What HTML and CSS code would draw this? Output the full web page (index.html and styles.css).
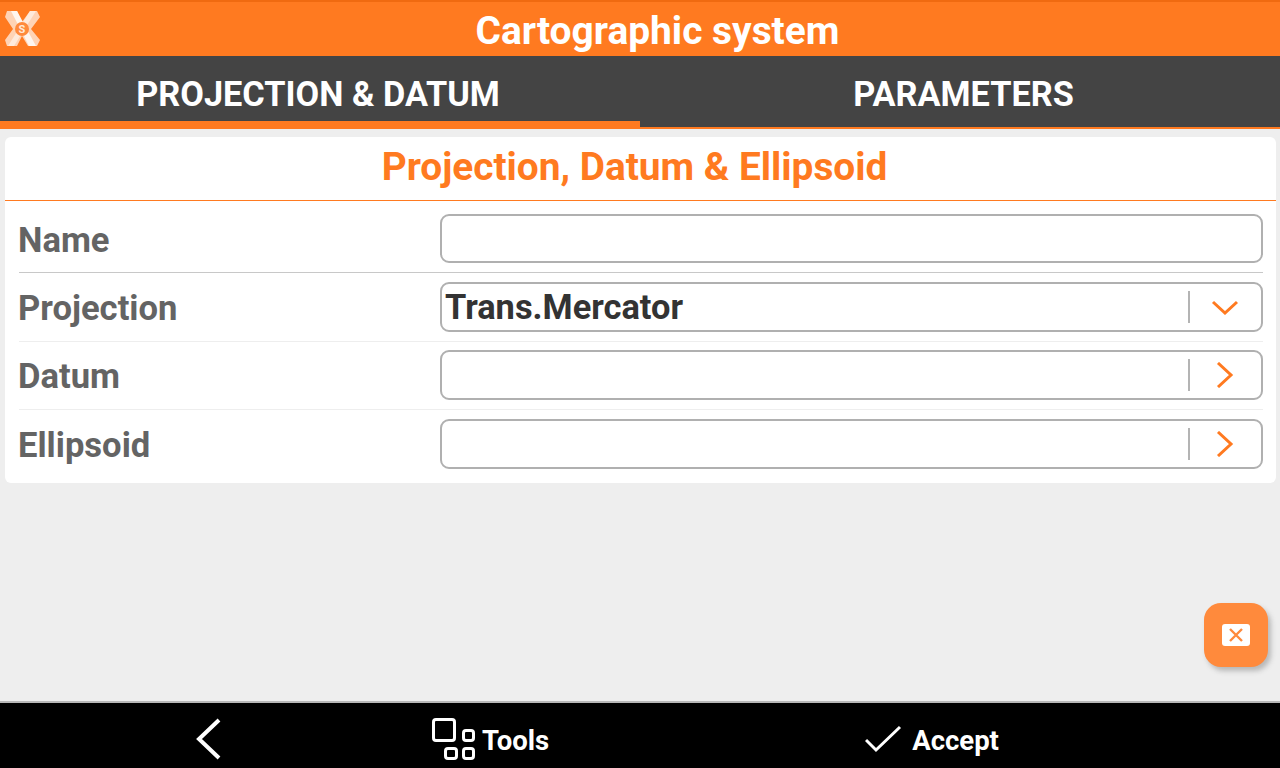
FILE: index.html
```html
<!DOCTYPE html>
<html lang="en">
<head>
<title>Cartographic system</title>
<meta charset="utf-8">
<meta name="viewport" content="width=device-width, initial-scale=1">
<link rel="stylesheet" href="styles.css">
</head>
<body>

<div class="header">
  <svg class="logo" width="44" height="50" viewBox="0 0 44 50">
    <path d="M7 11 L17 11 L22 22 L30 11 L37 11 L40 17 L31 29 L40 40 L37 46 L28 46 L22 36 L17 46 L7 46 L5 40 L13 29 L5 17 Z" fill="#ffd3b5"/>
    <path d="M11 11 L17 11 L36 46 L29 46 Z" fill="#fff6ef"/>
    <path d="M30 11 L36 11 L14 46 L8 46 Z" fill="#fff0e5" opacity="0.8"/>
    <circle cx="22" cy="29" r="7" fill="#ff8a3c"/>
    <text x="22" y="33" text-anchor="middle" class="logo_s">S</text>
  </svg>
  <h1>Cartographic system</h1>
</div>

<div class="tabs">
  <div class="tab active">PROJECTION &amp; DATUM</div>
  <div class="tab second">PARAMETERS</div>
</div>

<div class="content">
  <div class="card">
    <h2>Projection, Datum &amp; Ellipsoid</h2>

    <div class="row first">
      <label>Name</label>
      <div class="field"></div>
    </div>

    <div class="row">
      <label>Projection</label>
      <div class="field">
        <span class="value">Trans.Mercator</span>
        <span class="sep"></span>
        <svg class="arrow" width="28" height="16" viewBox="0 0 28 16"><path d="M2 3 L14 14 L26 3"/></svg>
      </div>
    </div>

    <div class="row">
      <label>Datum</label>
      <div class="field">
        <span class="sep"></span>
        <svg class="arrow" width="28" height="26" viewBox="0 0 28 26"><path d="M7 1 L20 13 L7 25"/></svg>
      </div>
    </div>

    <div class="row last">
      <label>Ellipsoid</label>
      <div class="field">
        <span class="sep"></span>
        <svg class="arrow" width="28" height="26" viewBox="0 0 28 26"><path d="M7 1 L20 13 L7 25"/></svg>
      </div>
    </div>
  </div>

  <div class="fab">
    <svg width="28" height="22" viewBox="0 0 28 22">
      <rect width="28" height="22" rx="3" fill="#fff"/>
      <path d="M8 5 L20 17 M20 5 L8 17" stroke="#ff8a3c" stroke-width="2.4"/>
    </svg>
  </div>
</div>

<div class="footer">
  <div class="foot_back">
    <svg width="28" height="42" viewBox="0 0 28 42"><path d="M24 2 L4 21 L24 40" class="foot_line"/></svg>
  </div>
  <div class="foot_tools">
    <svg width="44" height="42" viewBox="0 0 44 42" class="foot_icon">
      <rect x="1.5" y="1.5" width="21" height="21" rx="2.5"/>
      <rect x="31.5" y="12.5" width="10" height="10" rx="2.5"/>
      <rect x="13.5" y="30.5" width="11" height="10" rx="2.5"/>
      <rect x="31.5" y="30.5" width="10" height="10" rx="2.5"/>
    </svg>
    <span>Tools</span>
  </div>
  <div class="foot_accept">
    <svg width="38" height="28" viewBox="0 0 38 28"><path d="M1 15 L11 25 L35 2" class="foot_line thin"/></svg>
    <span>Accept</span>
  </div>
</div>

</body>
</html>
```

FILE: styles.css
```css
* {
  box-sizing: border-box;
}

html, body {
  margin: 0;
  height: 100%;
}

body {
  width: 1280px;
  height: 768px;
  overflow: hidden;
  display: flex;
  flex-direction: column;
  background-color: #eeeeee;
  font-family: Roboto, "Liberation Sans", sans-serif;
}

/* Top bar */
.header {
  height: 56px;
  background-color: #ff7a20;
  border-top: 2px solid #f06a10;
  display: flex;
  align-items: center;
  justify-content: center;
  position: relative;
}

.header h1 {
  margin: 0;
  padding: 4px 0 0 35px;
  color: #fff;
  font-size: 38.9px;
  font-weight: 700;
  line-height: 48px;
}

.logo {
  position: absolute;
  left: 0;
  top: -2px;
}

.logo_s {
  font-size: 11px;
  font-weight: 700;
  fill: #ffe9da;
}

/* Tabs */
.tabs {
  height: 73px;
  display: flex;
  background-color: #444444;
  border-bottom: 2px solid #ff7a20;
}

.tab {
  width: 50%;
  color: #fff;
  font-size: 34.3px;
  font-weight: 700;
  text-align: center;
  line-height: 76px;
}

.tab.active {
  height: 71px;
  border-bottom: 6px solid #ff7a20;
  padding-right: 4px;
}

.tab.second {
  padding-left: 7px;
}

/* Main area */
.content {
  flex: 1;
  padding: 8px 4px 0 5px;
  position: relative;
}

.card {
  background-color: #fff;
  border-radius: 6px;
  height: 346px;
  padding-bottom: 6px;
}

.card h2 {
  margin: 0;
  height: 64px;
  padding-right: 12px;
  color: #ff7a20;
  font-size: 38.8px;
  font-weight: 700;
  line-height: 60px;
  text-align: center;
  border-bottom: 1px solid #ff7a20;
}

.row {
  height: 68.5px;
  margin: 0 13px 0 14px;
  display: flex;
  align-items: center;
  justify-content: space-between;
  border-bottom: 1px solid #eeeeee;
}

.row.first {
  height: 72px;
  border-bottom: 1px solid #c8c8c8;
}

.row.last {
  border-bottom: none;
}

.row label {
  color: #646464;
  font-size: 34.6px;
  font-weight: 700;
  margin-top: 2px;
  margin-left: -1px;
}

.row.first label {
  margin-top: 7px;
}

.field {
  width: 823px;
  height: 50px;
  border: 2px solid #b0b0b0;
  border-radius: 9px;
  display: flex;
  align-items: center;
  padding: 0 22px 0 3px;
}

.row.first .field {
  height: 49px;
  margin-top: 4px;
}

.value {
  color: #333333;
  font-size: 34.4px;
  font-weight: 700;
}

.sep {
  width: 2px;
  height: 32px;
  background-color: #b4b4b4;
  margin-left: auto;
  margin-right: 21px;
}

.arrow path {
  fill: none;
  stroke: #ff7a20;
  stroke-width: 3;
}

/* Floating button */
.fab {
  position: absolute;
  left: 1204px;
  top: 474px;
  width: 64px;
  height: 64px;
  border-radius: 17px;
  background-color: #ff8a3c;
  box-shadow: 3px 4px 5px rgba(120, 120, 120, 0.45);
  display: flex;
  align-items: center;
  justify-content: center;
}

/* Bottom bar */
.footer {
  height: 67px;
  margin-top: -1px;
  padding-top: 7px;
  background-color: #000;
  border-top: 2px solid #b8b8b8;
  color: #fff;
  font-size: 27.5px;
  font-weight: 700;
  position: relative;
  display: flex;
  align-items: center;
}

.footer span {
  line-height: 44px;
  margin-top: 3px;
}

.foot_back {
  margin-left: 195px;
  display: flex;
}

.foot_tools {
  margin-left: 209px;
  display: flex;
  align-items: center;
  gap: 6px;
}

.foot_accept {
  margin-left: 316px;
  display: flex;
  align-items: center;
  gap: 9px;
}

.foot_icon rect {
  fill: none;
  stroke: #fff;
  stroke-width: 3;
}

.foot_line {
  fill: none;
  stroke: #fff;
  stroke-width: 4;
}

.foot_line.thin {
  stroke-width: 3;
}
```
